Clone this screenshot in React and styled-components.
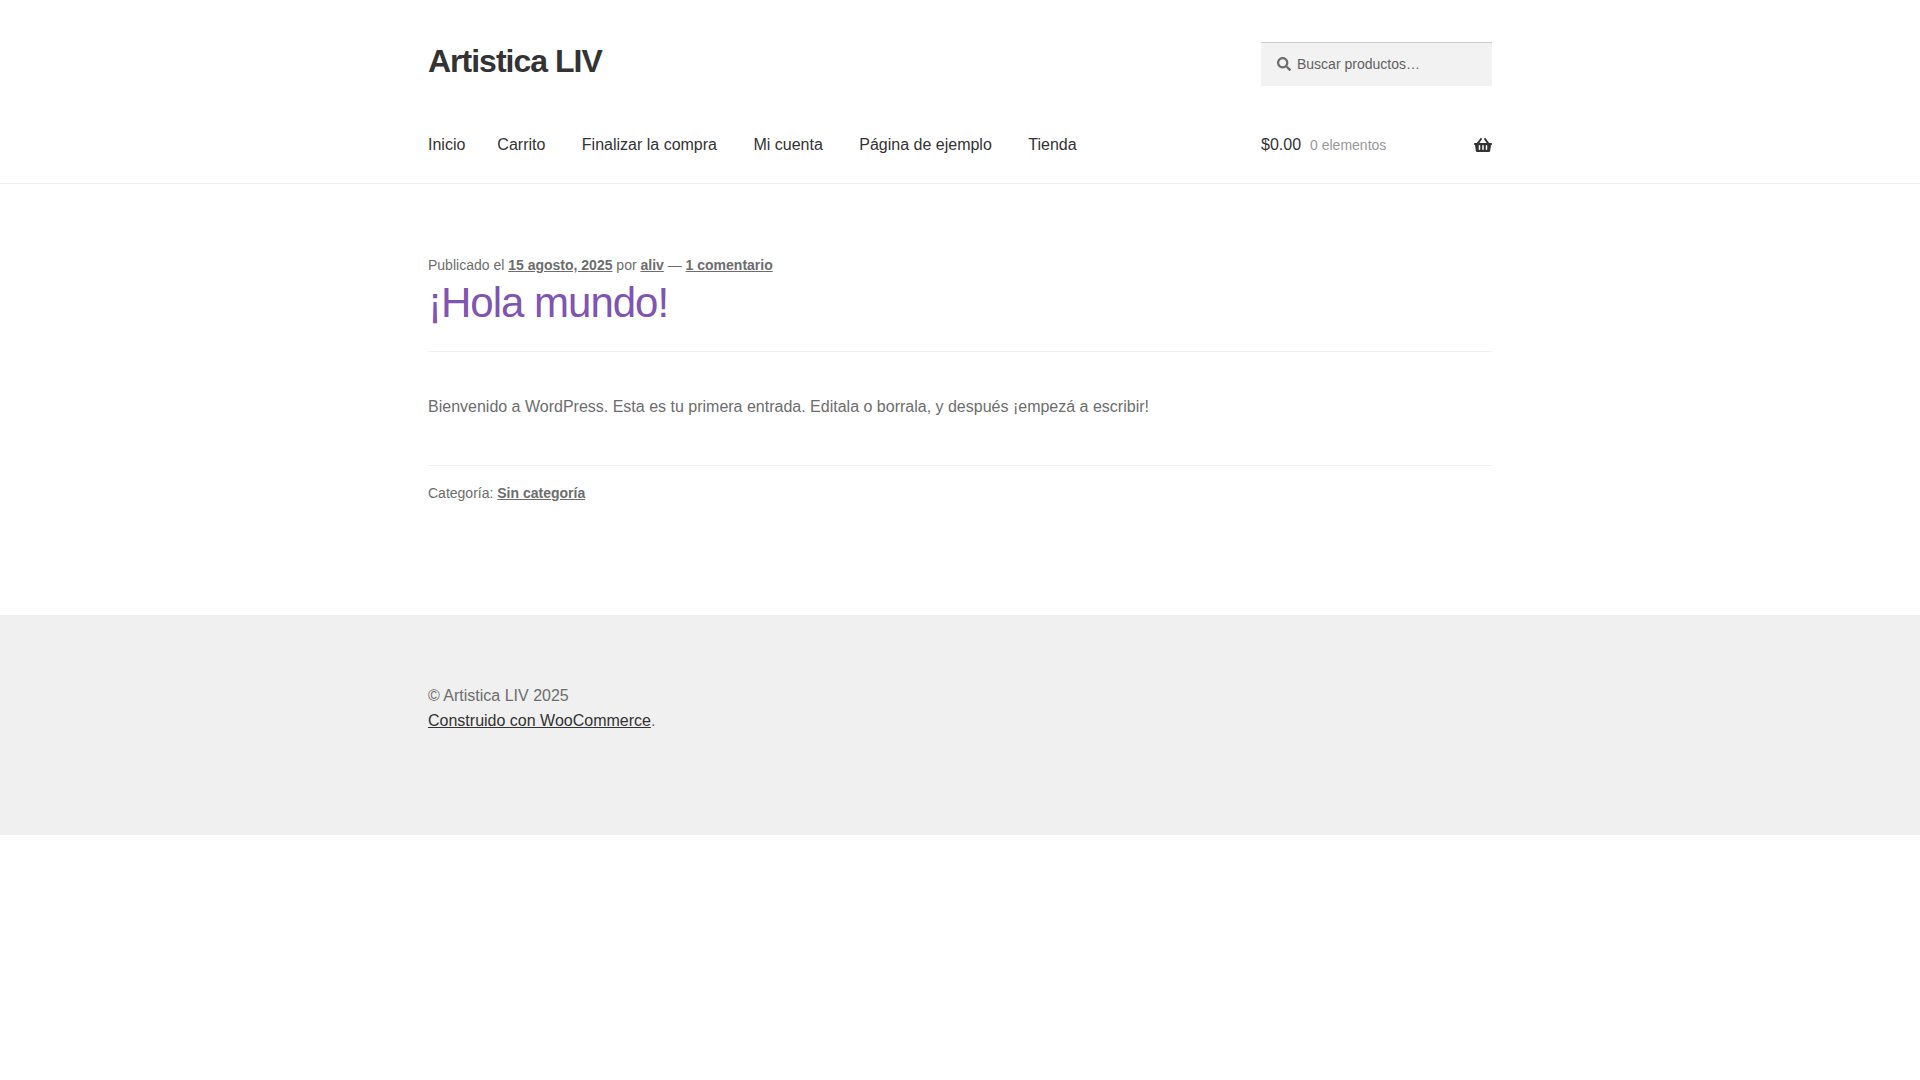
import React from 'react';
import styled, { createGlobalStyle } from 'styled-components';
import { FaSearch, FaShoppingBasket } from 'react-icons/fa';

const GlobalStyle = createGlobalStyle`
  *, *::before, *::after { box-sizing: border-box; }
  body {
    margin: 0;
    background: #fff;
    color: #6d6d6d;
    font-family: "Liberation Sans", Arial, sans-serif;
    font-size: 16px;
    line-height: 26px;
  }
`;

const Container = styled.div`
  max-width: 1064px;
  margin: 0 auto;
`;

const Header = styled.header`
  padding: 42px 0 25px;
  border-bottom: 1px solid #f0f0f0;
`;

const HeaderGrid = styled(Container)`
  display: grid;
  grid-template-columns: 1fr 231px;
  row-gap: 46px;
  align-items: start;
`;

const SiteTitle = styled.a`
  justify-self: start;
  color: #333;
  font-size: 32px;
  font-weight: 700;
  line-height: 38px;
  letter-spacing: -1px;
  text-decoration: none;
`;

const SearchForm = styled.form`
  display: flex;
`;

const SearchLabel = styled.label`
  flex: 1;
  min-width: 0;
  display: flex;
  align-items: center;
  gap: 6px;
  height: 44px;
  padding: 0 16px;
  background: #f2f2f2;
  box-shadow: inset 0 1px 0 #cdcdcd;
  color: #6d6d6d;
  font-size: 14px;
`;

const SearchInput = styled.input`
  flex: 1;
  min-width: 0;
  padding: 0;
  border: 0;
  outline: 0;
  background: transparent;
  color: #43454b;
  font: inherit;
  appearance: none;
  &::placeholder { color: #616161; opacity: 1; }
`;

const MenuList = styled.ul`
  display: flex;
  column-gap: 32px;
  margin: 0;
  padding: 0;
  list-style: none;
`;

const PageList = styled.ul`
  margin: 0 -16px;
  padding: 0;
  list-style: none;
`;

const PageItem = styled.li`
  display: inline-block;
  padding: 0 16px;
`;

const MenuLink = styled.a`
  color: #333;
  text-decoration: none;
`;

const CartLink = styled.a`
  display: flex;
  align-items: center;
  color: #333;
  text-decoration: none;
`;

const CartCount = styled.span`
  margin: 0 auto 0 9px;
  color: #999;
  font-size: 14px;
`;

const Main = styled.main`
  padding: 70px 0 111px;
`;

const EntryHeader = styled.header`
  padding-bottom: 21px;
  border-bottom: 1px solid #f0f0f0;
`;

const Meta = styled.div`
  font-size: 14px;
  line-height: 22px;
`;

const MetaLink = styled.a`
  color: #6d6d6d;
  font-weight: 700;
  text-decoration: underline;
`;

const EntryTitle = styled.h1`
  margin: 0;
  color: #7f54b3;
  font-size: 42px;
  font-weight: 400;
  line-height: 54px;
  letter-spacing: -1px;
`;

const EntryText = styled.p`
  margin: 42px 0 45px;
`;

const Taxonomy = styled.aside`
  padding-top: 16px;
  border-top: 1px solid #f0f0f0;
`;

const Footer = styled.footer`
  padding: 68px 0 102px;
  background: #f0f0f0;
  line-height: 25px;
`;

const FooterLink = styled.a`
  color: #333;
  text-decoration: underline;
`;

const pages = ['Carrito', 'Finalizar la compra', 'Mi cuenta', 'Página de ejemplo', 'Tienda'];

export default function App() {
  return (
    <>
      <GlobalStyle />
      <Header>
        <HeaderGrid>
          <SiteTitle href="#">Artistica LIV</SiteTitle>
          <SearchForm role="search">
            <SearchLabel>
              <FaSearch size={14} aria-hidden="true" />
              <SearchInput type="search" aria-label="Buscar productos" placeholder="Buscar productos…" />
            </SearchLabel>
          </SearchForm>
          <nav>
            <MenuList>
              <li><MenuLink href="#">Inicio</MenuLink></li>
              <li>
                <PageList>
                  {pages.map((page) => (
                    <React.Fragment key={page}>
                      <PageItem><MenuLink href="#">{page}</MenuLink></PageItem>{' '}
                    </React.Fragment>
                  ))}
                </PageList>
              </li>
            </MenuList>
          </nav>
          <CartLink href="#">
            <span>$0.00</span>
            <CartCount>0 elementos</CartCount>
            <FaShoppingBasket size={18} aria-hidden="true" />
          </CartLink>
        </HeaderGrid>
      </Header>

      <Main>
        <Container as="article">
          <EntryHeader>
            <Meta>
              Publicado el <MetaLink href="#">15 agosto, 2025</MetaLink> por{' '}
              <MetaLink href="#">aliv</MetaLink> — <MetaLink href="#">1 comentario</MetaLink>
            </Meta>
            <EntryTitle>¡Hola mundo!</EntryTitle>
          </EntryHeader>
          <EntryText>
            Bienvenido a WordPress. Esta es tu primera entrada. Editala o borrala, y después ¡empezá a escribir!
          </EntryText>
          <Taxonomy>
            <Meta>Categoría: <MetaLink href="#">Sin categoría</MetaLink></Meta>
          </Taxonomy>
        </Container>
      </Main>

      <Footer>
        <Container>
          © Artistica LIV 2025
          <br />
          <FooterLink href="#">Construido con WooCommerce</FooterLink>.
        </Container>
      </Footer>
    </>
  );
}
